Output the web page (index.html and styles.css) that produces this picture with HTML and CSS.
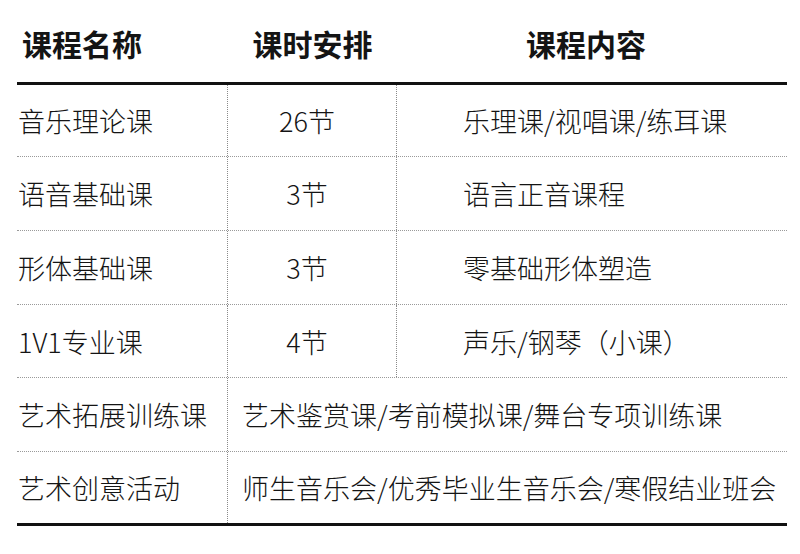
FILE: index.html
```html
<!DOCTYPE html>
<html lang="zh">
<head>
<meta charset="utf-8">
<link rel="stylesheet" href="styles.css">
</head>
<body>
<div class="table">
  <div class="head">
    <div class="h h1">课程名称</div>
    <div class="h h2">课时安排</div>
    <div class="h h3">课程内容</div>
  </div>
  <div class="body">
    <div class="row r1">
      <div class="c name">音乐理论课</div>
      <div class="c hours">26节</div>
      <div class="c content">乐理课/视唱课/练耳课</div>
    </div>
    <div class="row">
      <div class="c name">语音基础课</div>
      <div class="c hours">3节</div>
      <div class="c content">语言正音课程</div>
    </div>
    <div class="row">
      <div class="c name">形体基础课</div>
      <div class="c hours">3节</div>
      <div class="c content">零基础形体塑造</div>
    </div>
    <div class="row r4">
      <div class="c name">1V1专业课</div>
      <div class="c hours">4节</div>
      <div class="c content">声乐/钢琴（小课）</div>
    </div>
    <div class="row">
      <div class="c name">艺术拓展训练课</div>
      <div class="c wide">艺术鉴赏课/考前模拟课/舞台专项训练课</div>
    </div>
    <div class="row last">
      <div class="c name">艺术创意活动</div>
      <div class="c wide">师生音乐会/优秀毕业生音乐会/寒假结业班会</div>
    </div>
  </div>
</div>
</body>
</html>
```
FILE: styles.css
```css
html, body {
  margin: 0;
  padding: 0;
  background: #ffffff;
}
body {
  font-family: "Noto Sans CJK SC", "Noto Sans", sans-serif;
  color: #141414;
  width: 800px;
  height: 554px;
  overflow: hidden;
}
.table {
  margin-left: 17px;
  width: 770px;
}
.head {
  display: grid;
  grid-template-columns: 211px 169px 390px;
  height: 82px;
  border-bottom: 3px solid #111;
}
.h {
  display: flex;
  align-items: center;
  font-size: 30px;
  font-weight: 700;
  padding-top: 4px;
  box-sizing: border-box;
}
.h1 {
  padding-left: 5px;
}
.h2 {
  justify-content: center;
}
.h3 {
  justify-content: center;
  padding-right: 12px;
}
.body {
  border-bottom: 3px solid #111;
}
.row {
  display: grid;
  grid-template-columns: 211px 169px 390px;
  height: 73px;
  border-bottom: 1px dotted #9a9a9a;
}
.row.r1 {
  height: 71px;
}
.row.r4 {
  height: 72px;
}
.row.last {
  height: 71px;
  border-bottom: none;
}
.c {
  display: flex;
  align-items: center;
  font-size: 27px;
  font-weight: 300;
  line-height: 1;
  white-space: nowrap;
}
.name {
  padding-left: 1px;
  border-right: 1px dotted #8a8a8a;
}
.hours {
  justify-content: center;
  border-right: 1px dotted #8a8a8a;
  padding-right: 10px;
}
.content {
  padding-left: 66px;
}
.wide {
  grid-column: 2 / 4;
  padding-left: 14px;
}
```
